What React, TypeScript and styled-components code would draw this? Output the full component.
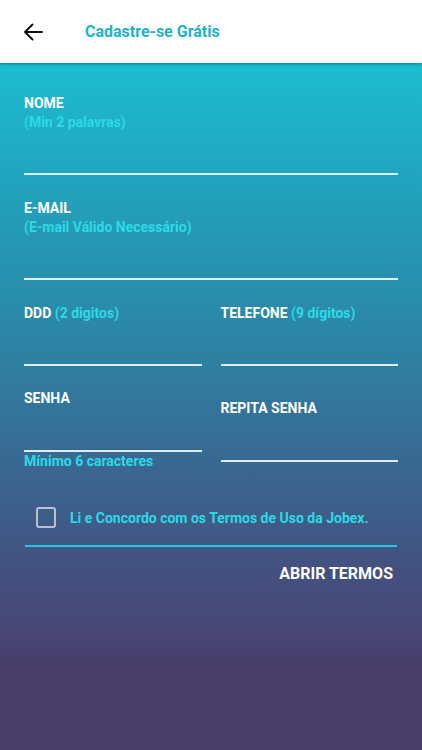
import React from 'react'
import styled, { createGlobalStyle } from 'styled-components'

const GlobalStyle = createGlobalStyle`
  html, body {
    margin: 0;
    padding: 0;
    background: #473e6a;
    font-family: Roboto, 'Liberation Sans', sans-serif;
  }
  * { box-sizing: border-box; }
`

const Page = styled.div`
  width: 422px;
  height: 750px;
  display: flex;
  flex-direction: column;
  overflow: hidden;
`

const Header = styled.header`
  height: 63px;
  flex-shrink: 0;
  background: #ffffff;
  display: flex;
  align-items: center;
  padding-left: 23px;
  gap: 42px;
  box-shadow: 0 1px 3px rgba(0, 0, 0, 0.35);
  position: relative;
  z-index: 1;
`

const BackButton = styled.button`
  border: 0;
  background: none;
  padding: 0;
  width: 20px;
  height: 20px;
  display: flex;
  align-items: center;
  justify-content: center;
`

const Title = styled.h1`
  margin: 0;
  font-size: 16px;
  font-weight: 700;
  color: #1eb3c8;
`

const Body = styled.main`
  flex: 1;
  background: linear-gradient(
    to bottom,
    #1cbdd0 0px,
    #2499b6 170px,
    #2c86a6 270px,
    #3a6690 410px,
    #435180 505px,
    #474a78 555px,
    #473e6a 600px,
    #473e6a 100%
  );
  padding: 31px 24px 0 24px;
  display: flex;
  flex-direction: column;
`

const Field = styled.div<{ $gap: number; $after: number; $shift?: number }>`
  display: flex;
  flex-direction: column;
  padding-top: ${({ $shift }) => $shift ?? 0}px;
  margin-bottom: ${({ $after }) => $after}px;

  .input {
    height: ${({ $gap }) => $gap}px;
  }
`

const Label = styled.div`
  font-size: 14px;
  line-height: 19px;
  font-weight: 700;
  color: #ffffff;
`

const Hint = styled.span`
  font-size: 14px;
  line-height: 19px;
  font-weight: 700;
  color: #2cdae6;
`

const Underline = styled.div<{ $color?: string }>`
  height: 2px;
  background: ${({ $color }) => $color ?? 'rgba(240, 248, 252, 0.92)'};
`

const Row = styled.div`
  display: grid;
  grid-template-columns: 1fr 1fr;
  column-gap: 19px;
  align-items: start;
`

const Terms = styled.div`
  margin-top: 36px;
  padding: 0 1px;
  display: flex;
  flex-direction: column;
`

const CheckRow = styled.label`
  display: flex;
  align-items: center;
  gap: 14px;
  padding-left: 11px;
  height: 21px;
  margin-bottom: 17px;
`

const Box = styled.span`
  width: 20px;
  height: 21px;
  border: 2px solid #b9c0d0;
  border-radius: 3px;
  flex-shrink: 0;
`

const CheckText = styled.span`
  font-size: 14px;
  font-weight: 700;
  color: #2cdae6;
`

const OpenTerms = styled.button`
  align-self: flex-end;
  margin-top: 17px;
  margin-right: 4px;
  border: 0;
  background: none;
  padding: 0;
  font-family: inherit;
  font-size: 16px;
  line-height: 20px;
  font-weight: 700;
  color: #ffffff;
`

const BackArrow = () => (
  <svg width="20" height="18" viewBox="0 0 20 18" fill="none">
    <path d="M19 9H2M9.5 1.5L2 9l7.5 7.5" stroke="#111" strokeWidth="2" strokeLinecap="round" strokeLinejoin="round" />
  </svg>
)

export default function App() {
  return (
    <Page>
      <GlobalStyle />
      <Header>
        <BackButton aria-label="Voltar">
          <BackArrow />
        </BackButton>
        <Title>Cadastre-se Grátis</Title>
      </Header>
      <Body>
        <Field $gap={41} $after={24}>
          <Label>NOME</Label>
          <Hint>(Min 2 palavras)</Hint>
          <div className="input" />
          <Underline />
        </Field>
        <Field $gap={41} $after={24}>
          <Label>E-MAIL</Label>
          <Hint>(E-mail Válido Necessário)</Hint>
          <div className="input" />
          <Underline />
        </Field>
        <Row>
          <Field $gap={41} $after={23}>
            <Label>
              DDD <Hint>(2 digitos)</Hint>
            </Label>
            <div className="input" />
            <Underline />
          </Field>
          <Field $gap={41} $after={23}>
            <Label>
              TELEFONE <Hint>(9 dígitos)</Hint>
            </Label>
            <div className="input" />
            <Underline />
          </Field>
        </Row>
        <Row>
          <Field $gap={42} $after={0}>
            <Label>SENHA</Label>
            <div className="input" />
            <Underline />
            <Hint>Mínimo 6 caracteres</Hint>
          </Field>
          <Field $gap={42} $after={0} $shift={10}>
            <Label>REPITA SENHA</Label>
            <div className="input" />
            <Underline />
          </Field>
        </Row>
        <Terms>
          <CheckRow>
            <Box />
            <CheckText>Li e Concordo com os Termos de Uso da Jobex.</CheckText>
          </CheckRow>
          <Underline $color="#27c4df" />
          <OpenTerms>ABRIR TERMOS</OpenTerms>
        </Terms>
      </Body>
    </Page>
  )
}
